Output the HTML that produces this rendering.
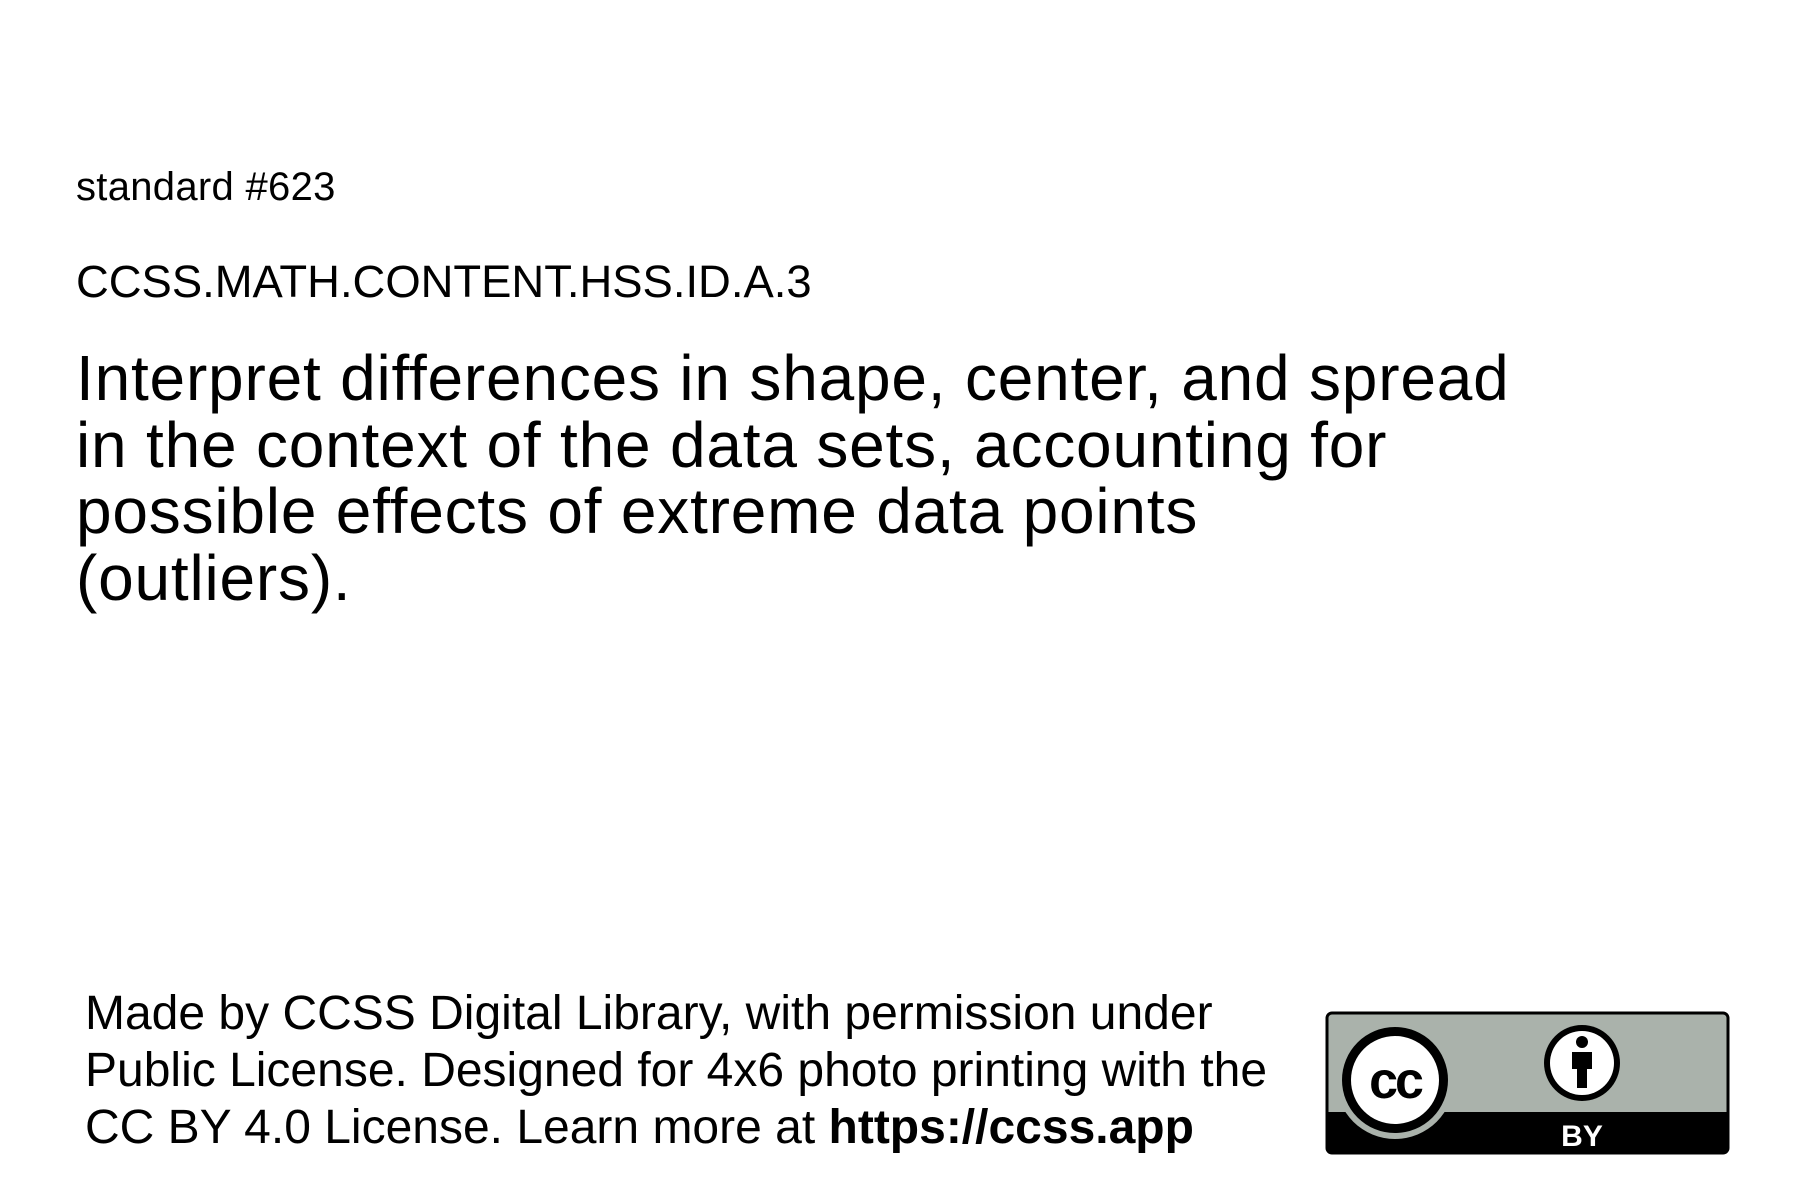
<!DOCTYPE html>
<html><head><meta charset="utf-8"><style>
html,body{margin:0;padding:0;background:#fff;}
body{width:1800px;height:1200px;position:relative;overflow:hidden;font-family:"Liberation Sans",sans-serif;color:#000;}
.t{position:absolute;white-space:nowrap;left:76px;}
#s{top:165px;font-size:40px;line-height:44px;letter-spacing:0.3px;}
#c{top:255px;font-size:45.4px;line-height:54px;}
#p{top:345px;font-size:64px;line-height:66.5px;letter-spacing:0.8px;}
#f{left:85px;top:985px;font-size:48px;line-height:57px;}
</style></head><body>
<div class="t" id="s">standard #623</div>
<div class="t" id="c">CCSS.MATH.CONTENT.HSS.ID.A.3</div>
<div class="t" id="p">Interpret differences in shape, center, and spread<br>in the context of the data sets, accounting for<br>possible effects of extreme data points<br>(outliers).</div>
<div class="t" id="f">Made by CCSS Digital Library, with permission under<br>Public License. Designed for 4x6 photo printing with the<br>CC BY 4.0 License. Learn more at <b>https://ccss.app</b></div>
<svg style="position:absolute;left:1325px;top:1011px" width="405" height="144" viewBox="0 0 405 144">
<defs><clipPath id="k"><rect x="2" y="2" width="401" height="140" rx="5"/></clipPath></defs>
<g clip-path="url(#k)">
<rect x="0" y="0" width="405" height="144" fill="#aab2ab"/>
<rect x="0" y="101" width="405" height="43" fill="#000"/>
<circle cx="70" cy="69" r="59" fill="#aab2ab"/>
</g>
<rect x="2" y="2" width="401" height="140" rx="5" fill="none" stroke="#000" stroke-width="3"/>
<circle cx="70" cy="69" r="53" fill="#000"/>
<circle cx="70" cy="69" r="44" fill="#fff"/>
<text x="70" y="87" text-anchor="middle" font-family="Liberation Sans" font-weight="bold" font-size="52" letter-spacing="-3">cc</text>
<circle cx="257" cy="52" r="38" fill="#000"/>
<circle cx="257" cy="52" r="32" fill="#fff"/>
<circle cx="257" cy="31" r="6" fill="#000"/>
<path d="M247 41h20v17h-5v19h-10v-19h-5z" fill="#000"/>
<text x="257" y="135" text-anchor="middle" font-family="Liberation Sans" font-weight="bold" font-size="30" fill="#fff">BY</text>
</svg>
</body></html>
